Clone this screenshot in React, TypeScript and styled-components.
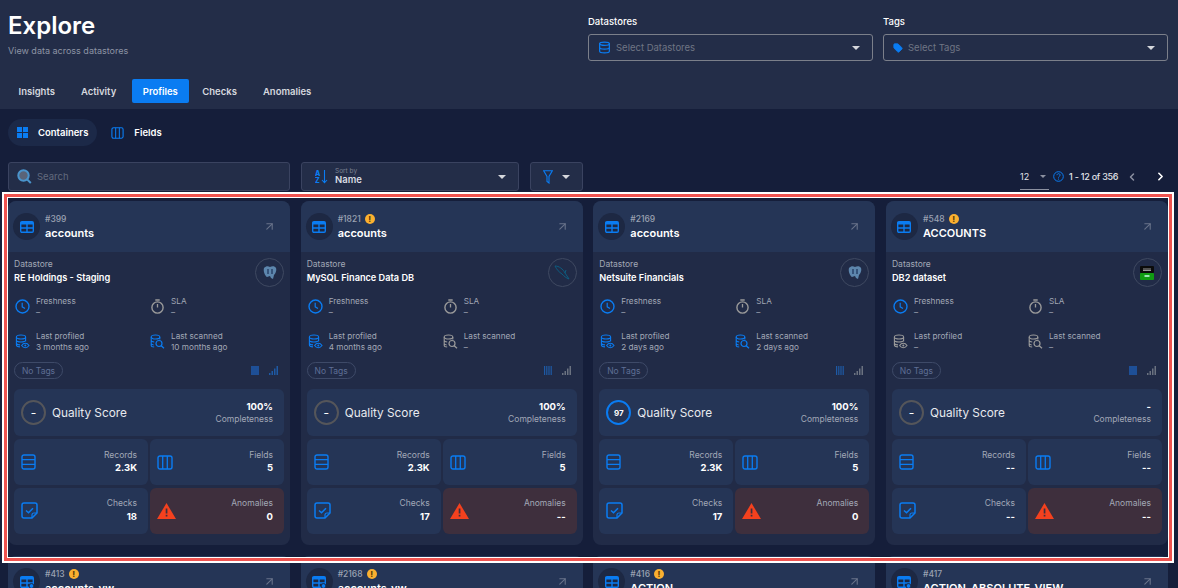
import React from 'react';
import styled, { createGlobalStyle } from 'styled-components';
import { ChevronLeft, ChevronRight, ArrowUpRight, Database, Tag } from 'lucide-react';

const GlobalStyle = createGlobalStyle`
  html, body { margin: 0; padding: 0; height: 100%; overflow: hidden; }
  body { background: #151e3a; font-family: Inter, "Liberation Sans", sans-serif; color: #fff; }
  * { box-sizing: border-box; }
`;

const Page = styled.div`
  position: relative;
  width: 1178px;
  height: 588px;
  overflow: hidden;
  background: #151e3a;
`;

const Header = styled.header`
  height: 109px;
  background: #232d48;
  padding: 0 10px 0 8px;
  display: flex;
  flex-direction: column;
`;

const HeaderTop = styled.div`
  display: flex;
  justify-content: space-between;
  height: 79px;
`;

const TitleBlock = styled.div`
  padding-top: 10px;
`;

const Title = styled.h1`
  margin: 0;
  font-size: 24px;
  line-height: 31px;
  font-weight: 600;
`;

const Subtitle = styled.div`
  font-size: 9px;
  line-height: 14px;
  margin-top: 3px;
  color: #8d94a5;
`;

const Filters = styled.div`
  display: flex;
  gap: 10px;
  padding-top: 15px;
`;

const FilterField = styled.div`
  width: 285px;
`;

const FieldLabel = styled.div`
  font-size: 9.5px;
  font-weight: 500;
  line-height: 13px;
  margin-bottom: 6px;
`;

const SelectBox = styled.div`
  height: 27px;
  border: 1px solid #7b7f8a;
  border-radius: 3px;
  display: flex;
  align-items: center;
  padding: 0 12px 0 9px;
  gap: 5px;
  font-size: 9.5px;
  color: #6f7584;
`;

const Caret = styled.span<{ $muted?: boolean }>`
  margin-left: auto;
  width: 0;
  height: 0;
  border-left: ${p => (p.$muted ? '3.5px' : '4px')} solid transparent;
  border-right: ${p => (p.$muted ? '3.5px' : '4px')} solid transparent;
  border-top: ${p => (p.$muted ? '3.5px' : '4px')} solid ${p => (p.$muted ? '#8b90a0' : '#d5d7dc')};
`;

const Tabs = styled.nav`
  display: flex;
  height: 24px;
`;

const TabItem = styled.div<{ $active?: boolean }>`
  display: flex;
  align-items: center;
  height: 24px;
  padding: 0 ${p => (p.$active ? '11px' : '10.5px')};
  margin-right: ${p => (p.$active ? '3px' : '5px')};
  border-radius: 2px;
  font-size: 9.5px;
  font-weight: 600;
  color: ${p => (p.$active ? '#fff' : '#d5d8df')};
  background: ${p => (p.$active ? '#0a7cf2' : 'transparent')};
`;

const Content = styled.main`
  padding: 10px 10px 0 8px;
`;

const SubTabs = styled.div`
  display: flex;
  align-items: center;
  height: 27px;
  gap: 14px;
`;

const SubTab = styled.div<{ $active?: boolean }>`
  display: flex;
  align-items: center;
  height: 27px;
  gap: 10px;
  padding: ${p => (p.$active ? '0 9px 0 9px' : '0')};
  border-radius: 14px;
  background: ${p => (p.$active ? '#1c2948' : 'transparent')};
  font-size: 9.5px;
  font-weight: 600;
`;

const Toolbar = styled.div`
  display: flex;
  align-items: center;
  margin-top: 16px;
  height: 29px;
`;

const ToolBox = styled.div<{ $w: number; $mr: number }>`
  width: ${p => p.$w}px;
  margin-right: ${p => p.$mr}px;
  height: 29px;
  background: #232d48;
  border: 1px solid #3a4360;
  border-radius: 3px;
  display: flex;
  align-items: center;
  font-size: 9.5px;
  color: #626a7d;
`;

const SearchBox = styled(ToolBox)`
  padding-left: 8px;
  gap: 5px;
`;

const SortBox = styled(ToolBox)`
  padding: 0 12px 0 13px;
  gap: 7px;
`;

const FilterBox = styled(ToolBox)`
  padding: 0 12px;
  justify-content: space-between;
`;

const SortText = styled.div`
  display: flex;
  flex-direction: column;
`;

const SortCaption = styled.span`
  font-size: 6.5px;
  line-height: 7px;
  color: #7b8292;
`;

const SortValue = styled.span`
  font-size: 9.5px;
  line-height: 10px;
  font-weight: 600;
  color: #d9dce3;
`;

const Pager = styled.div`
  margin-left: auto;
  display: flex;
  align-items: center;
  font-size: 9px;
  color: #e1e3e8;
  height: 29px;
`;

const PageSize = styled.div`
  width: 29px;
  height: 26px;
  display: flex;
  align-items: center;
  justify-content: space-between;
  border-bottom: 1px solid #8b90a0;
  padding-right: 3px;
  margin-right: 4px;
`;

const PagerRange = styled.span`
  width: 49px;
  margin: 0 8px 0 5px;
  white-space: nowrap;
  font-weight: 500;
  letter-spacing: -0.25px;
`;

const PrevButton = styled(ChevronLeft)`
  margin-right: 16px;
`;

const NextButton = styled(ChevronRight)`
  margin-right: 1px;
`;

const Grid = styled.div`
  display: grid;
  grid-template-columns: repeat(4, 282px);
  column-gap: 10.67px;
  row-gap: 11px;
  margin-top: 10px;
`;

const Card = styled.article`
  height: 344px;
  border-radius: 8px;
  overflow: hidden;
  background: #212b47;
`;

const CardHead = styled.div`
  height: 51px;
  background: #253556;
  display: flex;
  align-items: center;
  padding: 0 14px 0 5px;
`;

const IconCircle = styled.div`
  width: 27px;
  height: 27px;
  border-radius: 50%;
  background: #1d2843;
  display: flex;
  align-items: center;
  justify-content: center;
  flex: none;
`;

const HeadText = styled.div`
  margin-left: 5px;
  flex: 1;
`;

const IdRow = styled.div`
  display: flex;
  align-items: center;
  gap: 4px;
  height: 13px;
  font-size: 8.5px;
  color: #9ba2b2;
  font-weight: 500;
`;

const WarnDot = styled.span`
  width: 10px;
  height: 10px;
  border-radius: 50%;
  background: #fbb030;
  color: #5a3c05;
  font-size: 8px;
  font-weight: 800;
  line-height: 10px;
  text-align: center;
`;

const CardName = styled.div`
  font-size: 11px;
  line-height: 16px;
  font-weight: 600;
`;

const CardBody = styled.div`
  padding: 6px 6px 0 6px;
`;

const DatastoreRow = styled.div`
  display: flex;
  justify-content: space-between;
  height: 34px;
`;

const DatastoreLabel = styled.div`
  font-size: 8.5px;
  line-height: 13px;
  color: #a2a8b6;
`;

const DatastoreName = styled.div`
  font-size: 9.2px;
  line-height: 14px;
  font-weight: 600;
`;

const LogoCircle = styled.div`
  width: 29px;
  height: 29px;
  border-radius: 50%;
  border: 1px solid #3f4961;
  display: flex;
  align-items: center;
  justify-content: center;
  flex: none;
`;

const MetaGrid = styled.div`
  display: grid;
  grid-template-columns: 135px 1fr;
  grid-auto-rows: 35px;
  margin-top: -3px;
  padding-left: 1px;
`;

const MetaItem = styled.div`
  display: flex;
  align-items: center;
  gap: 6px;
`;

const MetaText = styled.div`
  font-size: 8.2px;
  line-height: 10px;
  color: #a2a8b6;
`;

const MetaLabel = styled.div`
  line-height: 11px;
`;

const TagsRow = styled.div`
  display: flex;
  align-items: center;
  height: 17px;
  margin-top: 3px;
`;

const TagPill = styled.div`
  height: 17px;
  width: 49px;
  border: 1px solid #3e4a68;
  border-radius: 9px;
  display: flex;
  align-items: center;
  justify-content: center;
  font-size: 8.5px;
  color: #5f6f95;
`;

const MiniIcons = styled.div`
  margin-left: auto;
  margin-right: 6px;
  display: flex;
  align-items: center;
  gap: 10px;
`;

const ScoreCard = styled.div`
  margin-top: 10px;
  height: 47px;
  background: #253556;
  border-radius: 6px;
  display: flex;
  align-items: center;
  padding: 0 11px 0 7px;
`;

const Ring = styled.div<{ $blue?: boolean }>`
  width: 25px;
  height: 25px;
  border-radius: 50%;
  border: 2.5px solid ${p => (p.$blue ? '#0a7cf2' : '#55565a')};
  display: flex;
  align-items: center;
  justify-content: center;
  font-size: 8px;
  font-weight: 700;
`;

const ScoreTitle = styled.div`
  margin-left: 6px;
  font-size: 11.8px;
  font-weight: 400;
  color: #e8eaef;
`;

const Completeness = styled.div`
  margin-left: auto;
  text-align: right;
  display: flex;
  flex-direction: column;
  gap: 1px;
`;

const BigValue = styled.div`
  font-size: 9.5px;
  line-height: 12px;
  font-weight: 700;
`;

const SmallLabel = styled.div`
  font-size: 8.5px;
  line-height: 11px;
  color: #a2a8b6;
`;

const Tiles = styled.div`
  display: grid;
  grid-template-columns: 134px 134px;
  grid-auto-rows: 46px;
  gap: 2.5px 2px;
  margin-top: 3px;
`;

const Tile = styled.div<{ $alert?: boolean }>`
  background: ${p => (p.$alert ? '#3e2f3d' : '#253556')};
  border-radius: 6px;
  display: flex;
  align-items: center;
  justify-content: space-between;
  padding: 0 11px 0 7px;
`;

const TileText = styled.div`
  text-align: right;
  display: flex;
  flex-direction: column;
  gap: 1.5px;
`;

const Annotation = styled.div`
  position: absolute;
  left: 2px;
  top: 192px;
  width: 1172px;
  height: 371px;
  border: 2px solid #fff;
  box-shadow: inset 0 0 0 3px #ef5350, inset 0 0 0 4px #fff;
  pointer-events: none;
`;

const BLUE = '#0a7cf2';
const GREY = '#9a9a9a';

const TableIcon: React.FC<{ eye?: boolean }> = ({ eye }) => (
  <svg width="14" height="12" viewBox="0 0 14 12" fill="none">
    <rect x="0.7" y="0.7" width="12.6" height="10.6" rx="1.2" stroke={BLUE} strokeWidth="1.4" />
    <path d="M1 2.2h12" stroke={BLUE} strokeWidth="2.4" />
    <path d="M1 7h12M7 3v8" stroke={BLUE} strokeWidth="1.4" />
    {eye && <circle cx="11.5" cy="10" r="2.4" fill={BLUE} stroke="#1d2843" />}
  </svg>
);

const ClockIcon = () => (
  <svg width="15" height="15" viewBox="0 0 15 15" fill="none">
    <circle cx="7.5" cy="7.5" r="6.5" stroke={BLUE} strokeWidth="1.4" />
    <path d="M7.2 3.8v4l2.8 1.8" stroke={BLUE} strokeWidth="1.2" />
  </svg>
);

const TimerIcon = () => (
  <svg width="15" height="15" viewBox="0 0 15 15" fill="none">
    <circle cx="7.5" cy="8.5" r="5.6" stroke={GREY} strokeWidth="1.4" />
    <path d="M5.3 1h4.4M7.5 5v3.6" stroke={GREY} strokeWidth="1.3" />
  </svg>
);

const DbEyeIcon: React.FC<{ color: string }> = ({ color }) => (
  <svg width="15" height="15" viewBox="0 0 15 15" fill="none">
    <ellipse cx="6" cy="3" rx="4.6" ry="2" stroke={color} strokeWidth="1.1" />
    <path d="M1.4 3v8c0 1 1.6 1.8 3.6 1.9M10.6 3v4.4M1.4 6c0 1 2 2 4.6 2s4.6-1 4.6-2M1.4 9c0 1 1.5 1.8 3.6 1.9" stroke={color} strokeWidth="1.1" />
    <path d="M6.6 11.5c1-1.5 2.2-2.2 3.7-2.2s2.7.7 3.7 2.2c-1 1.5-2.2 2.2-3.7 2.2s-2.7-.7-3.7-2.2z" stroke={color} strokeWidth="1.1" />
    <circle cx="10.3" cy="11.5" r="1" fill={color} />
  </svg>
);

const DbSearchIcon: React.FC<{ color: string }> = ({ color }) => (
  <svg width="15" height="15" viewBox="0 0 15 15" fill="none">
    <ellipse cx="5.5" cy="3" rx="4.3" ry="2" stroke={color} strokeWidth="1.1" />
    <path d="M1.2 3v8.5c0 .8 1.3 1.4 3 1.5M9.8 3v2.5M1.2 6.3c0 .9 1.3 1.5 3 1.7M1.2 9.5c0 .8 1 1.3 2.5 1.5" stroke={color} strokeWidth="1.1" />
    <circle cx="9" cy="9.5" r="3" stroke={color} strokeWidth="1.2" />
    <path d="M11.2 11.7l2.8 2.5" stroke={color} strokeWidth="1.3" />
  </svg>
);

const RecordsIcon = () => (
  <svg width="15" height="16" viewBox="0 0 15 16" fill="none">
    <rect x="1" y="1" width="13" height="14" rx="2" stroke={BLUE} strokeWidth="1.4" />
    <path d="M1 5.7h13M1 10.3h13" stroke={BLUE} strokeWidth="1.3" />
  </svg>
);

const FieldsIcon: React.FC<{ size?: number }> = ({ size = 16 }) => (
  <svg width={size} height={size - 1} viewBox="0 0 16 15" fill="none">
    <rect x="1" y="1" width="14" height="13" rx="2" stroke={BLUE} strokeWidth="1.4" />
    <path d="M5.7 1v13M10.3 1v13" stroke={BLUE} strokeWidth="1.3" />
  </svg>
);

const ChecksIcon = () => (
  <svg width="17" height="17" viewBox="0 0 17 17" fill="none">
    <path d="M3 1h11a2 2 0 0 1 2 2v8l-5 5H3a2 2 0 0 1-2-2V3a2 2 0 0 1 2-2z" stroke={BLUE} strokeWidth="1.5" />
    <path d="M11 16v-3a2 2 0 0 1 2-2h3" stroke={BLUE} strokeWidth="1.2" />
    <path d="M5 8.5l2.5 2.3 4.5-4.6" stroke={BLUE} strokeWidth="1.5" />
  </svg>
);

const WarnIcon = () => (
  <svg width="19" height="16" viewBox="0 0 19 16">
    <path d="M9.5 0L19 16H0z" fill="#f4411e" />
    <rect x="8.7" y="5.5" width="1.7" height="5" fill="#3e2f3d" />
    <rect x="8.7" y="11.8" width="1.7" height="1.7" fill="#3e2f3d" />
  </svg>
);

const GridSquaresIcon = () => (
  <svg width="11" height="11" viewBox="0 0 11 11">
    <path d="M0 0h5v5H0zM6 0h5v5H6zM0 6h5v5H0zM6 6h5v5H6z" fill={BLUE} />
  </svg>
);

const FunnelIcon = () => (
  <svg width="10" height="14" viewBox="0 0 10 14" fill="none">
    <path d="M.7.8h8.6L6 6.5V13L4 11.5v-5z" stroke={BLUE} strokeWidth="1.1" />
  </svg>
);

const HelpIcon = () => (
  <svg width="11" height="11" viewBox="0 0 11 11" fill="none">
    <circle cx="5.5" cy="5.5" r="4.8" stroke={BLUE} />
    <path d="M4 4.2c0-2 3.1-2 3.1-.1 0 1.2-1.6 1.3-1.6 2.5M5.5 7.6v1" stroke={BLUE} />
  </svg>
);

const SearchIcon = () => (
  <svg width="15" height="15" viewBox="0 0 15 15" fill="none">
    <circle cx="6.5" cy="6.5" r="5.2" fill="#5a6478" stroke="#4a94cc" strokeWidth="2" />
    <path d="M10.2 10.5l3.6 3.4" stroke="#4a94cc" strokeWidth="2" />
  </svg>
);

const SortIcon = () => (
  <svg width="13" height="15" viewBox="0 0 13 15" fill="none">
    <text x="0" y="6.5" fontSize="7" fontWeight="800" fill={BLUE} fontFamily="Inter, sans-serif">A</text>
    <text x="0" y="14" fontSize="7" fontWeight="800" fill={BLUE} fontFamily="Inter, sans-serif">Z</text>
    <path d="M9.5 1v12.5M7 11l2.5 2.7L12 11" stroke={BLUE} strokeWidth="1.1" />
  </svg>
);

const PostgresLogo = () => (
  <svg width="16" height="16" viewBox="0 0 16 16">
    <path d="M2 3c2-2 4-2 6-1 2-1 5-1 6 1 1 3-1 6-2 7l-1 4-2-1-1-2-3 1C3 11 1 6 2 3z" fill="#5d86ad" />
    <path d="M6 4v5M10 4v5" stroke="#29436b" strokeWidth="1.5" />
  </svg>
);

const MysqlLogo = () => (
  <svg width="20" height="20" viewBox="0 0 20 20" fill="none">
    <path d="M3 3c4 0 8 3 10 7l4 6c-3-1-5-3-7-5C7 9 5 7 3 3zM13 10l1-3" stroke="#0d5c80" strokeWidth="1" />
  </svg>
);

const Db2Logo = () => (
  <svg width="14" height="14" viewBox="0 0 14 14">
    <rect width="14" height="7" rx="1" fill="#0b0b0b" />
    <rect y="7" width="14" height="7" rx="1" fill="#109c12" />
    <path d="M3 3h8M3 4.5h8" stroke="#bbb" strokeWidth="0.8" />
    <path d="M4.5 10h5" stroke="#cfe" strokeWidth="1.5" />
  </svg>
);

const SmallBars: React.FC<{ color: string }> = ({ color }) => (
  <svg width="9" height="9" viewBox="0 0 9 9">
    <path d="M0 7h1.500v2H0zM2.500 5H4v4H2.500zM5 2.500h1.500V9H5zM7.500 0H9v9H7.500z" fill={color} />
  </svg>
);

const SmallColumns: React.FC<{ solid?: boolean }> = ({ solid }) => (
  <svg width="8" height="9" viewBox="0 0 8 9">
    {solid ? (
      <rect width="8" height="9" fill="#1e4f96" />
    ) : (
      <path d="M0 0h1.200v9H0zM2.200 0h1.200v9H2.200zM4.400 0h1.200v9H4.400zM6.600 0h1.200v9H6.600z" fill="#1e5aa5" />
    )}
  </svg>
);

type MetaValue = { text: string; active: boolean };

type CardData = {
  id: string;
  warn?: boolean;
  name: string;
  datastore: string;
  logo: React.ReactNode;
  profiled: MetaValue;
  scanned: MetaValue;
  solidColumns?: boolean;
  barsBlue?: boolean;
  score: string;
  completeness: string;
  records: string;
  fields: string;
  checks: string;
  anomalies: string;
};

const cards: CardData[] = [
  { id: '#399', name: 'accounts', datastore: 'RE Holdings - Staging', logo: <PostgresLogo />, profiled: { text: '3 months ago', active: true }, scanned: { text: '10 months ago', active: true }, solidColumns: true, barsBlue: true, score: '–', completeness: '100%', records: '2.3K', fields: '5', checks: '18', anomalies: '0' },
  { id: '#1821', warn: true, name: 'accounts', datastore: 'MySQL Finance Data DB', logo: <MysqlLogo />, profiled: { text: '4 months ago', active: true }, scanned: { text: '–', active: false }, score: '–', completeness: '100%', records: '2.3K', fields: '5', checks: '17', anomalies: '--' },
  { id: '#2169', name: 'accounts', datastore: 'Netsuite Financials', logo: <PostgresLogo />, profiled: { text: '2 days ago', active: true }, scanned: { text: '2 days ago', active: true }, score: '97', completeness: '100%', records: '2.3K', fields: '5', checks: '17', anomalies: '0' },
  { id: '#548', warn: true, name: 'ACCOUNTS', datastore: 'DB2 dataset', logo: <Db2Logo />, profiled: { text: '–', active: false }, scanned: { text: '–', active: false }, solidColumns: true, score: '–', completeness: '-', records: '--', fields: '--', checks: '--', anomalies: '--' },
];

const nextRow = [
  { id: '#413', warn: true, name: 'accounts_vw', eye: true },
  { id: '#2168', warn: true, name: 'accounts_vw', eye: true },
  { id: '#416', warn: true, name: 'ACTION', eye: false },
  { id: '#417', warn: false, name: 'ACTION_ABSOLUTE_VIEW', eye: true },
];

const CardHeader: React.FC<{ id: string; warn?: boolean; name: string; eye?: boolean }> = ({ id, warn, name, eye }) => (
  <CardHead>
    <IconCircle><TableIcon eye={eye} /></IconCircle>
    <HeadText>
      <IdRow>{id}{warn && <WarnDot>!</WarnDot>}</IdRow>
      <CardName>{name}</CardName>
    </HeadText>
    <ArrowUpRight size={13} color="#69738a" />
  </CardHead>
);

const ProfileCard: React.FC<{ data: CardData }> = ({ data }) => (
  <Card>
    <CardHeader id={data.id} warn={data.warn} name={data.name} />
    <CardBody>
      <DatastoreRow>
        <div>
          <DatastoreLabel>Datastore</DatastoreLabel>
          <DatastoreName>{data.datastore}</DatastoreName>
        </div>
        <LogoCircle>{data.logo}</LogoCircle>
      </DatastoreRow>
      <MetaGrid>
        <MetaItem>
          <ClockIcon />
          <MetaText><MetaLabel>Freshness</MetaLabel>–</MetaText>
        </MetaItem>
        <MetaItem>
          <TimerIcon />
          <MetaText><MetaLabel>SLA</MetaLabel>–</MetaText>
        </MetaItem>
        <MetaItem>
          <DbEyeIcon color={data.profiled.active ? BLUE : GREY} />
          <MetaText><MetaLabel>Last profiled</MetaLabel>{data.profiled.text}</MetaText>
        </MetaItem>
        <MetaItem>
          <DbSearchIcon color={data.scanned.active ? BLUE : GREY} />
          <MetaText><MetaLabel>Last scanned</MetaLabel>{data.scanned.text}</MetaText>
        </MetaItem>
      </MetaGrid>
      <TagsRow>
        <TagPill>No Tags</TagPill>
        <MiniIcons>
          <SmallColumns solid={data.solidColumns} />
          <SmallBars color={data.barsBlue ? '#1e5aa5' : '#6b7280'} />
        </MiniIcons>
      </TagsRow>
      <ScoreCard>
        <Ring $blue={data.score === '97'}>{data.score}</Ring>
        <ScoreTitle>Quality Score</ScoreTitle>
        <Completeness>
          <BigValue>{data.completeness}</BigValue>
          <SmallLabel>Completeness</SmallLabel>
        </Completeness>
      </ScoreCard>
      <Tiles>
        <Tile>
          <RecordsIcon />
          <TileText><SmallLabel>Records</SmallLabel><BigValue>{data.records}</BigValue></TileText>
        </Tile>
        <Tile>
          <FieldsIcon />
          <TileText><SmallLabel>Fields</SmallLabel><BigValue>{data.fields}</BigValue></TileText>
        </Tile>
        <Tile>
          <ChecksIcon />
          <TileText><SmallLabel>Checks</SmallLabel><BigValue>{data.checks}</BigValue></TileText>
        </Tile>
        <Tile $alert>
          <WarnIcon />
          <TileText><SmallLabel>Anomalies</SmallLabel><BigValue>{data.anomalies}</BigValue></TileText>
        </Tile>
      </Tiles>
    </CardBody>
  </Card>
);

const App: React.FC = () => (
  <Page>
    <GlobalStyle />
    <Header>
      <HeaderTop>
        <TitleBlock>
          <Title>Explore</Title>
          <Subtitle>View data across datastores</Subtitle>
        </TitleBlock>
        <Filters>
          <FilterField>
            <FieldLabel>Datastores</FieldLabel>
            <SelectBox>
              <Database size={13} color={BLUE} strokeWidth={2.2} />
              Select Datastores
              <Caret />
            </SelectBox>
          </FilterField>
          <FilterField>
            <FieldLabel>Tags</FieldLabel>
            <SelectBox>
              <Tag size={10} color={BLUE} fill={BLUE} />
              Select Tags
              <Caret />
            </SelectBox>
          </FilterField>
        </Filters>
      </HeaderTop>
      <Tabs>
        <TabItem>Insights</TabItem>
        <TabItem>Activity</TabItem>
        <TabItem $active>Profiles</TabItem>
        <TabItem>Checks</TabItem>
        <TabItem>Anomalies</TabItem>
      </Tabs>
    </Header>
    <Content>
      <SubTabs>
        <SubTab $active><GridSquaresIcon />Containers</SubTab>
        <SubTab><FieldsIcon size={13} />Fields</SubTab>
      </SubTabs>
      <Toolbar>
        <SearchBox $w={282} $mr={11}>
          <SearchIcon />
          Search
        </SearchBox>
        <SortBox $w={218} $mr={11}>
          <SortIcon />
          <SortText>
            <SortCaption>Sort by</SortCaption>
            <SortValue>Name</SortValue>
          </SortText>
          <Caret />
        </SortBox>
        <FilterBox $w={53} $mr={0}>
          <FunnelIcon />
          <Caret />
        </FilterBox>
        <Pager>
          <PageSize>12<Caret $muted /></PageSize>
          <HelpIcon />
          <PagerRange>1 - 12 of 356</PagerRange>
          <PrevButton size={12} color="#8b90a0" strokeWidth={3} />
          <NextButton size={13} color="#fff" strokeWidth={3} />
        </Pager>
      </Toolbar>
      <Grid>
        {cards.map(c => <ProfileCard key={c.id} data={c} />)}
        {nextRow.map(c => (
          <Card key={c.id}>
            <CardHeader id={c.id} warn={c.warn} name={c.name} eye={c.eye} />
          </Card>
        ))}
      </Grid>
    </Content>
    <Annotation />
  </Page>
);

export default App;
